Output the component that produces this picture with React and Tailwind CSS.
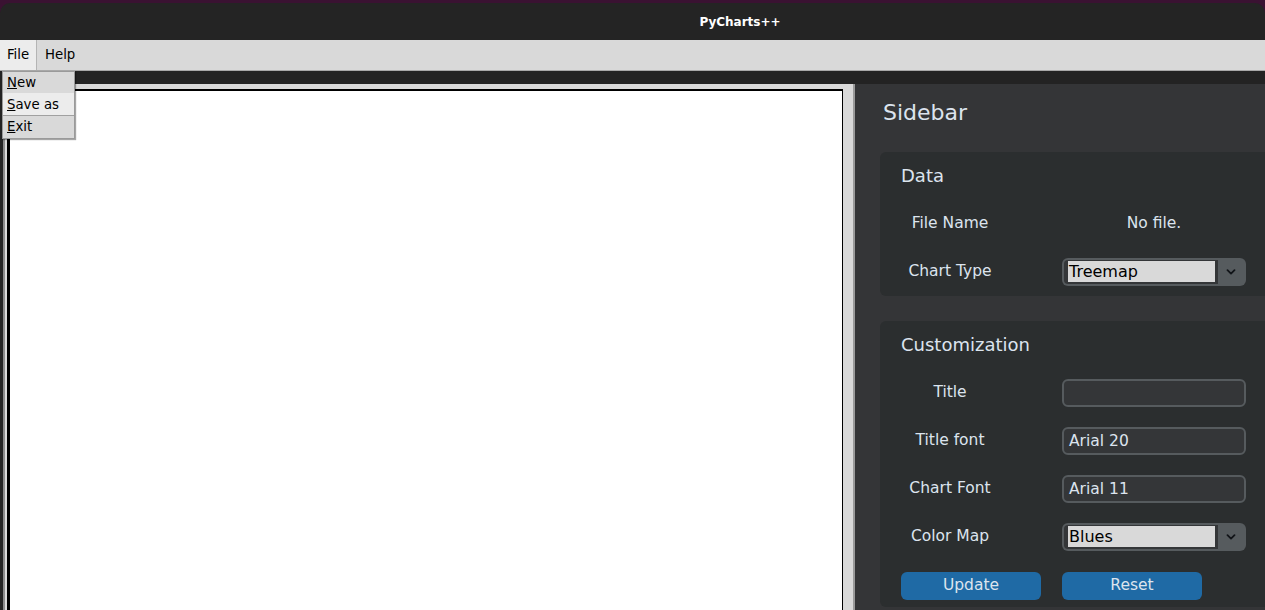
import React from 'react';

const font = { fontFamily: '"DejaVu Sans", Verdana, sans-serif' };

function Chevron() {
  return (
    <svg width="10" height="6" viewBox="0 0 10 6" fill="none">
      <path d="M1.5 1.2 L5 4.6 L8.5 1.2" stroke="#111418" strokeWidth="1.8" strokeLinecap="round" strokeLinejoin="round" />
    </svg>
  );
}

function Combo({ value }) {
  return (
    <div className="w-[184px] h-[28px] rounded-[6px] bg-[#565b5e] p-[2px] flex">
      <div className="flex-1 bg-[#343638] rounded-l-[4px] pl-[4px] pt-[1px] pb-[2px] pr-[3px] flex">
        <div className="flex-1 bg-[#d9d9d9] text-black text-[16px] leading-[21px] pl-[1px]">{value}</div>
      </div>
      <div className="w-[26px] flex items-center justify-center">
        <Chevron />
      </div>
    </div>
  );
}

function Entry({ value }) {
  return (
    <div className="w-[184px] h-[28px] rounded-[6px] bg-[#343638] border-2 border-[#565b5e] px-[5px] text-[15.5px] leading-[24px] text-[#dce4ee]">
      {value}
    </div>
  );
}

function Row({ label, children }) {
  return (
    <div className="h-[48px] flex items-center">
      <div className="w-[140px] text-center text-[15.5px] text-[#dce4ee]">{label}</div>
      <div className="ml-[42px] w-[184px] flex justify-center">{children}</div>
    </div>
  );
}

export default function App() {
  return (
    <div className="w-[1265px] h-[610px] overflow-hidden bg-[#3a1232] flex flex-col relative" style={font}>
      {/* window title bar */}
      <div className="mt-[3px] h-[37px] bg-[#242424] rounded-t-[10px] flex items-center justify-center pl-[215px]">
        <span className="text-white font-bold text-[12px]">PyCharts++</span>
      </div>

      {/* menu bar */}
      <div className="h-[31px] bg-[#d9d9d9] border-b border-[#a8a8a8] flex items-stretch text-[13.3px] text-black">
        <div className="w-[37px] bg-[#ececec] border-r border-[#b4b4b4] flex items-center justify-center">File</div>
        <div className="px-[8px] flex items-center">Help</div>
      </div>

      {/* body */}
      <div className="flex-1 bg-[#232323] pt-[13px] pl-[3px] flex min-h-0">
        <div className="w-[852px] bg-[#d9d9d9] border-l-2 border-[#8a8a8a] border-r-2 border-r-[#9a9a9a] pt-[5px] pl-[2px] pr-[10px] flex">
          <div className="flex-1 bg-white border-t-2 border-l-[3px] border-r border-black"></div>
        </div>

        <div className="flex-1 bg-[#343537] overflow-hidden pl-[25px]">
          <div className="pt-[15px] mb-[25px] pl-[3px] text-[22px] leading-[28px] text-[#dce4ee]">Sidebar</div>

          <div className="w-[400px] bg-[#2b2e2f] rounded-[6px]">
            <div className="h-[46px] flex items-center pl-[21px] text-[18px] text-[#dce4ee]">Data</div>
            <div className="pt-[2px]">
              <Row label="File Name">
                <span className="text-[15.5px] text-[#dce4ee]">No file.</span>
              </Row>
              <Row label="Chart Type">
                <Combo value="Treemap" />
              </Row>
            </div>
          </div>

          <div className="mt-[25px] w-[400px] bg-[#2b2e2f] rounded-[6px] pb-[7px]">
            <div className="h-[46px] flex items-center pl-[21px] text-[18px] text-[#dce4ee]">Customization</div>
            <div className="pt-[2px]">
              <Row label="Title">
                <Entry value="" />
              </Row>
              <Row label="Title font">
                <Entry value="Arial 20" />
              </Row>
              <Row label="Chart Font">
                <Entry value="Arial 11" />
              </Row>
              <Row label="Color Map">
                <Combo value="Blues" />
              </Row>
            </div>
            <div className="mt-[11px] flex pl-[21px] gap-[21px]">
              <button className="w-[140px] h-[28px] rounded-[6px] bg-[#1f6aa5] text-[15.5px] text-[#dce4ee]">Update</button>
              <button className="w-[140px] h-[28px] rounded-[6px] bg-[#1f6aa5] text-[15.5px] text-[#dce4ee]">Reset</button>
            </div>
          </div>
        </div>
      </div>

      {/* open File menu */}
      <div className="absolute left-[2px] top-[71px] w-[73px] bg-[#d9d9d9] border border-[#9a9a9a] shadow-[1px_1px_1px_rgba(0,0,0,0.35)] text-[13.3px] text-black">
        <div className="h-[22px] flex items-center pl-[4px] border-b border-[#ececec]"><span className="underline">N</span>ew</div>
        <div className="h-[22px] flex items-center pl-[4px] bg-[#ececec] border-b border-[#a0a0a0]"><span className="underline">S</span>ave as</div>
        <div className="h-[22px] flex items-center pl-[4px]"><span className="underline">E</span>xit</div>
      </div>
    </div>
  );
}
